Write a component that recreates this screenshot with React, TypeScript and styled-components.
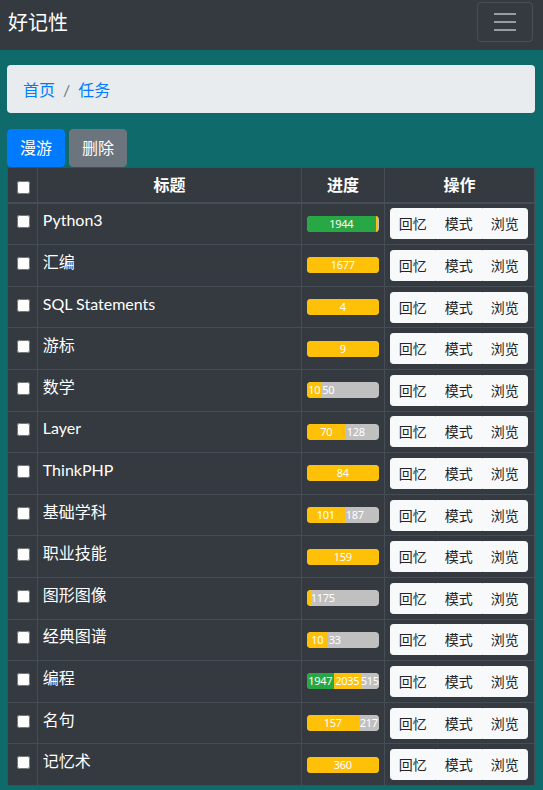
import React from 'react';
import styled, { createGlobalStyle } from 'styled-components';

const GlobalStyle = createGlobalStyle`
    html, body {
        margin: 0;
        padding: 0;
        background: #0e6a6b;
        font-family: Lato, "Noto Sans CJK SC", sans-serif;
        font-size: 16px;
        line-height: 1.5;
        color: #212529;
    }
`;

const Navbar = styled.nav`
    display: flex;
    align-items: flex-start;
    justify-content: space-between;
    height: 50px;
    box-sizing: border-box;
    padding: 2px 10px 8px 8px;
    background: #343a40;
`;

const Brand = styled.a`
    color: #fff;
    font-size: 20px;
    line-height: 40px;
    text-decoration: none;
`;

const Toggler = styled.button`
    width: 56px;
    height: 40px;
    padding: 0;
    display: flex;
    align-items: center;
    justify-content: center;
    background: transparent;
    border: 1px solid rgba(255, 255, 255, 0.1);
    border-radius: 4px;
`;

const Container = styled.div`
    padding: 15px 8px 5px 7px;
`;

const Breadcrumb = styled.ol`
    display: flex;
    margin: 0 0 16px;
    padding: 13px 16px 11px;
    list-style: none;
    background: #e9ecef;
    border-radius: 4px;
`;

const Crumb = styled.li<{ $first?: boolean }>`
    color: #007bff;
    &::before {
        content: ${p => (p.$first ? 'none' : '"/"')};
        display: inline-block;
        padding: 0 8px;
        color: #6c757d;
    }
`;

const Toolbar = styled.div`
    display: flex;
    gap: 4px;
`;

const Button = styled.button<{ $variant: 'primary' | 'secondary' }>`
    font-family: inherit;
    font-size: 16px;
    line-height: 24px;
    padding: 6px 12px;
    border-radius: 4px;
    color: #fff;
    border: 1px solid ${p => (p.$variant === 'primary' ? '#007bff' : '#6c757d')};
    background: ${p => (p.$variant === 'primary' ? '#007bff' : '#6c757d')};
`;

const Table = styled.table`
    width: 100%;
    table-layout: fixed;
    border-collapse: collapse;
    background: #343a40;
    color: #fff;
    border: 1px solid #454d55;

    th, td {
        border: 1px solid #454d55;
        padding: 4.8px;
        vertical-align: top;
    }

    th {
        font-weight: bold;
        text-align: center;
        border-bottom-width: 2px;
        vertical-align: bottom;
    }
`;

const Check = styled.input<{ $top: number }>`
    display: block;
    margin: ${p => p.$top}px 3px 3px 4px;
    width: 13px;
    height: 13px;
`;

const ProgressCell = styled.td`
    && {
        vertical-align: middle;
    }
`;

const Progress = styled.div`
    display: flex;
    height: 16px;
    overflow: hidden;
    border-radius: 4px;
    background: #c0c0c0;
    font-size: 11px;
    line-height: 16px;
    font-family: "Noto Sans", sans-serif;
    letter-spacing: -0.3px;
`;

const Segment = styled.div<{ $color: string }>`
    flex: 0 0 auto;
    color: #fff;
    text-align: center;
    white-space: nowrap;
    background: ${p => p.$color};
`;

const BtnGroup = styled.div`
    display: inline-flex;
`;

const LightButton = styled.button`
    font-family: inherit;
    font-size: 14px;
    line-height: 21px;
    padding: 4px 8px;
    color: #212529;
    background: #f8f9fa;
    border: 1px solid #f8f9fa;
    border-radius: 0;
    &:first-child {
        border-radius: 3.2px 0 0 3.2px;
    }
    &:last-child {
        border-radius: 0 3.2px 3.2px 0;
    }
`;

const GREEN = '#28a745';
const YELLOW = '#ffc107';
const GRAY = '#c0c0c0';

type Seg = [string, string, number];

const tasks: { title: string; segs: Seg[] }[] = [
    { title: 'Python3', segs: [[GREEN, '1944', 69], [YELLOW, '', 2]] },
    { title: '汇编', segs: [[YELLOW, '1677', 72]] },
    { title: 'SQL Statements', segs: [[YELLOW, '4', 72]] },
    { title: '游标', segs: [[YELLOW, '9', 72]] },
    { title: '数学', segs: [[YELLOW, '10', 15], [GRAY, '50', 13]] },
    { title: 'Layer', segs: [[YELLOW, '70', 39], [GRAY, '128', 20]] },
    { title: 'ThinkPHP', segs: [[YELLOW, '84', 72]] },
    { title: '基础学科', segs: [[YELLOW, '101', 38], [GRAY, '187', 20]] },
    { title: '职业技能', segs: [[YELLOW, '159', 72]] },
    { title: '图形图像', segs: [[YELLOW, '', 4], [GRAY, '1175', 0]] },
    { title: '经典图谱', segs: [[YELLOW, '10', 21], [GRAY, '33', 14]] },
    { title: '编程', segs: [[GREEN, '1947', 27], [YELLOW, '2035', 27], [GRAY, '515', 18]] },
    { title: '名句', segs: [[YELLOW, '157', 52], [GRAY, '217', 20]] },
    { title: '记忆术', segs: [[YELLOW, '360', 72]] },
];

function App() {
    return (
        <>
            <GlobalStyle />
            <Navbar>
                <Brand href="#">好记性</Brand>
                <Toggler>
                    <svg width="30" height="30" viewBox="0 0 30 30">
                        <path
                            d="M4 7h22M4 15h22M4 23h22"
                            stroke="rgba(255,255,255,0.5)"
                            strokeWidth="2"
                        />
                    </svg>
                </Toggler>
            </Navbar>
            <Container>
                <Breadcrumb>
                    <Crumb $first>首页</Crumb>
                    <Crumb>任务</Crumb>
                </Breadcrumb>
                <Toolbar>
                    <Button $variant="primary">漫游</Button>
                    <Button $variant="secondary">删除</Button>
                </Toolbar>
                <Table>
                    <colgroup>
                        <col style={{ width: 30 }} />
                        <col />
                        <col style={{ width: 83 }} />
                        <col style={{ width: 150 }} />
                    </colgroup>
                    <thead>
                        <tr>
                            <th><Check type="checkbox" $top={6} /></th>
                            <th>标题</th>
                            <th>进度</th>
                            <th>操作</th>
                        </tr>
                    </thead>
                    <tbody>
                        {tasks.map((task, index) =>
                            <tr key={index + 1}>
                                <td><Check type="checkbox" $top={7} /></td>
                                <td>{task.title}</td>
                                <ProgressCell>
                                    <Progress>
                                        {task.segs.map(([color, label, width], i) =>
                                            <Segment
                                                key={i}
                                                $color={color}
                                                style={{ width: width || undefined }}
                                            >
                                                {label}
                                            </Segment>
                                        )}
                                    </Progress>
                                </ProgressCell>
                                <td>
                                    <BtnGroup>
                                        <LightButton>回忆</LightButton>
                                        <LightButton>模式</LightButton>
                                        <LightButton>浏览</LightButton>
                                    </BtnGroup>
                                </td>
                            </tr>
                        )}
                    </tbody>
                </Table>
            </Container>
        </>
    );
}

export default App;
